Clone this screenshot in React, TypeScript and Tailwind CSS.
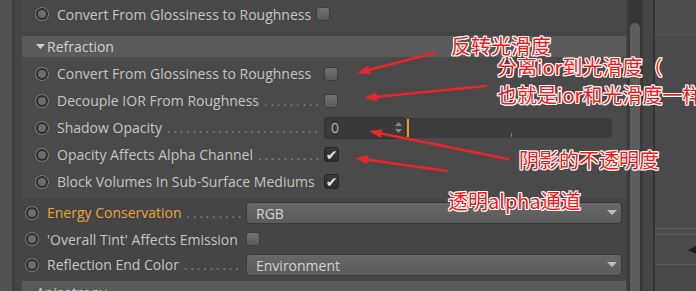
import React from 'react';

const FONT = { fontFamily: '"Open Sans", "Liberation Sans", sans-serif' };
const CJK = { fontFamily: '"Noto Sans CJK SC", "Noto Sans", sans-serif' };

function Radio() {
  return (
    <span className="w-[14px] h-[14px] shrink-0 rounded-full bg-[#7a7a7a] p-[1px] flex">
      <span className="flex-1 rounded-full bg-[#2c2c2c] p-[2px] flex">
        <span className="flex-1 rounded-full bg-[#6c6c6c]" />
      </span>
    </span>
  );
}

function Check({ on }: { on?: boolean }) {
  if (on) {
    return (
      <span className="ml-[4px] w-[15px] h-[15px] shrink-0 rounded-[3px] bg-gradient-to-b from-[#3a3a3a] to-[#2c2c2c] border border-[#262626] flex items-center justify-center text-[#e4e4e4] text-[14px] leading-none italic" style={{ fontFamily: '"DejaVu Sans", sans-serif' }}>
        ✔
      </span>
    );
  }
  return <span className="ml-[4px] block w-[14px] h-[14px] shrink-0 rounded-[3px] bg-gradient-to-b from-[#727272] to-[#5a5a5a] border border-[#3c3c3c]" />;
}

function Label({ text, width, dots, orange }: { text: string; width: number; dots?: boolean; orange?: boolean }) {
  return (
    <div className="flex items-baseline overflow-hidden ml-[8px]" style={{ width }}>
      <span className={`text-[14px] whitespace-nowrap ${orange ? 'text-[#e9a23b]' : 'text-[#c4c4c4]'}`}>{text}</span>
      {dots && (
        <span className="flex-1 ml-[5px] overflow-hidden whitespace-nowrap text-[13px] text-[#8a8a8a] tracking-[3px] text-right">
          ..............................................
        </span>
      )}
    </div>
  );
}

function Dropdown({ value }: { value: string }) {
  return (
    <div className="ml-[4px] w-[376px] h-[22px] rounded-[4px] border border-[#393939] bg-gradient-to-b from-[#676767] to-[#5b5b5b] flex items-center justify-between pl-[9px] pr-[4px]">
      <span className="text-[14px] text-[#d2d2d2]">{value}</span>
      <svg width="10" height="6" viewBox="0 0 10 6"><path d="M0 0h10L5 5z" fill="#bdbdbd" /></svg>
    </div>
  );
}

function arrow(tx: number, ty: number, hx: number, hy: number) {
  const dx = hx - tx, dy = hy - ty;
  const len = Math.hypot(dx, dy);
  const ux = dx / len, uy = dy / len;
  const bx = hx - ux * 13, by = hy - uy * 13;
  const px = -uy * 4.5, py = ux * 4.5;
  return (
    <g key={`${tx}-${ty}`}>
      <line x1={tx} y1={ty} x2={bx + ux * 2} y2={by + uy * 2} stroke="#e8262b" strokeWidth="2.6" strokeLinecap="round" />
      <polygon points={`${hx},${hy} ${bx + px},${by + py} ${bx - px},${by - py}`} fill="#e8262b" />
    </g>
  );
}

const NOTE = 'absolute text-[20px] leading-none whitespace-nowrap text-[#ff1414] [text-shadow:1px_0_0_#fff,-1px_0_0_#fff,0_1px_0_#fff,0_-1px_0_#fff,1px_1px_0_#fff,-1px_-1px_0_#fff,1px_-1px_0_#fff,-1px_1px_0_#fff]';

export default function App() {
  return (
    <div className="relative w-[696px] h-[291px] overflow-hidden flex bg-[#454545]" style={FONT}>
      {/* left strip */}
      <div className="w-[13px] shrink-0 bg-[#525252] border-r border-[#3e3e3e]" />

      {/* main attribute column */}
      <div className="w-[614px] shrink-0 flex flex-col">
        <div className="ml-[9px] mr-[1px] bg-[#484848] pb-[4px]">
          <div className="h-[28px] flex items-center pl-[13px]">
            <Radio />
            <Label text="Convert From Glossiness to Roughness" width={255} />
            <Check />
          </div>
        </div>

        <div className="ml-[9px] mr-[1px] mt-[4px] bg-[#4a4a4a] pb-[3px]">
          <div className="h-[21px] bg-[#5a5a5a] flex items-center pl-[14px]">
            <svg width="9" height="6" viewBox="0 0 9 6"><path d="M0 0h9L4.5 5z" fill="#d0d0d0" /></svg>
            <span className="ml-[2px] text-[14px] text-[#cfcfcf]">Refraction</span>
          </div>
          <div className="pt-[3px]">
            <div className="h-[27px] flex items-center pl-[13px]">
              <Radio />
              <Label text="Convert From Glossiness to Roughness" width={263} />
              <Check />
            </div>
            <div className="h-[27px] flex items-center pl-[13px]">
              <Radio />
              <Label text="Decouple IOR From Roughness" width={263} dots />
              <Check />
            </div>
            <div className="h-[27px] flex items-center pl-[13px]">
              <Radio />
              <Label text="Shadow Opacity" width={263} dots />
              <div className="ml-[4px] flex items-center h-[22px]">
                <div className="w-[82px] h-full rounded-[3px] bg-[#393939] border border-[#303030] flex items-center justify-between pl-[6px] pr-[3px]">
                  <span className="text-[14px] text-[#a6b3c6]">0</span>
                  <svg width="7" height="11" viewBox="0 0 7 11">
                    <path d="M0 4L3.5 0L7 4z" fill="#8a8a8a" />
                    <path d="M0 7L3.5 11L7 7z" fill="#8a8a8a" />
                  </svg>
                </div>
                <div className="ml-[1px] w-[205px] h-[20px] rounded-r-[3px] bg-[#3c3c3c] relative flex items-stretch">
                  <span className="w-[2px] my-[1px] bg-[#e59a17]" />
                  <span className="absolute left-[104px] bottom-[1px] w-[1px] h-[4px] bg-[#a8741c]" />
                </div>
              </div>
            </div>
            <div className="h-[27px] flex items-center pl-[13px]">
              <Radio />
              <Label text="Opacity Affects Alpha Channel" width={263} dots />
              <Check on />
            </div>
            <div className="h-[27px] flex items-center pl-[13px]">
              <Radio />
              <Label text="Block Volumes In Sub-Surface Mediums" width={263} />
              <Check on />
            </div>
          </div>
        </div>

        <div className="mt-[2px]">
          <div className="h-[26px] flex items-center pl-[12px]">
            <Radio />
            <Label text="Energy Conservation" width={195} dots orange />
            <Dropdown value="RGB" />
          </div>
          <div className="h-[26px] flex items-center pl-[12px]">
            <Radio />
            <Label text="'Overall Tint' Affects Emission" width={195} />
            <Check />
          </div>
          <div className="h-[26px] flex items-center pl-[12px]">
            <Radio />
            <Label text="Reflection End Color" width={195} dots />
            <Dropdown value="Environment" />
          </div>
        </div>

        <div className="ml-[9px] mr-[1px] mt-[3px] h-[21px] bg-[#5a5a5a] flex items-start pl-[14px] overflow-hidden">
          <span className="mt-[2px] text-[14px] leading-[20px] text-[#cfcfcf]">Anisotropy</span>
        </div>
      </div>

      {/* scrollbar */}
      <div className="w-[28px] shrink-0 flex bg-[#3f3f3f] border-l-[3px] border-[#3a3a3a]">
        <div className="w-[10px] flex flex-col bg-[#363636]">
          <div className="h-[23px]" />
          <div className="flex-1 rounded-t-[5px] bg-[#5d5d5d]" />
        </div>
        <div className="w-[3px] bg-[#393939]" />
        <div className="flex-1 bg-[#454545] border-r-2 border-[#333333]" />
      </div>

      {/* right panel */}
      <div className="flex-1 flex flex-col bg-[#4b4b4b]">
        <div className="h-[36px] bg-[#4e4e4e]" />
        <div className="h-[192px] bg-[#4a4a4a] border-t border-[#454545]" />
        <div className="h-[7px] border-t border-[#5e5e5e] border-b border-[#3a3a3a] bg-[#4d4d4d]" />
        <div className="h-[30px] flex items-center justify-end border-b border-[#5a5a5a]">
          <svg width="8" height="8" viewBox="0 0 8 8"><path d="M8 0v8L0 4z" fill="#1c1c1c" /></svg>
        </div>
        <div className="flex-1 bg-[#484848]" />
      </div>

      {/* annotations */}
      <svg className="absolute inset-0 pointer-events-none" width="696" height="291">
        {arrow(435, 53, 357, 73)}
        {arrow(486, 86, 364, 98)}
        {arrow(508, 159, 369, 131)}
        {arrow(447, 171, 355, 158)}
      </svg>
      <span className={NOTE} style={{ ...CJK, left: 451, top: 36 }}>反转光滑度</span>
      <span className={NOTE} style={{ ...CJK, left: 497, top: 57 }}>分离ior到光滑度（</span>
      <span className={NOTE} style={{ ...CJK, left: 497, top: 85 }}>也就是ior和光滑度一样</span>
      <span className={NOTE} style={{ ...CJK, left: 519, top: 150 }}>阴影的不透明度</span>
      <span className={NOTE} style={{ ...CJK, left: 448, top: 191 }}>透明alpha通道</span>
    </div>
  );
}
